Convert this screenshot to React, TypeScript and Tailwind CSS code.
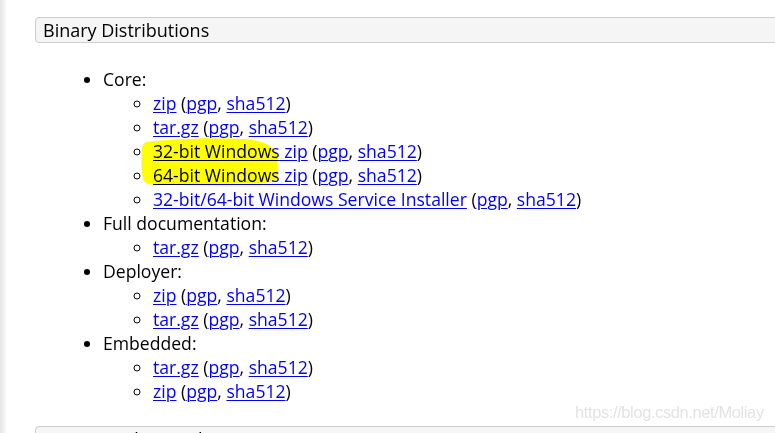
import React from "react";

const A = ({ children }: { children: React.ReactNode }) => (
  <a href="#" className="text-[#0000ee] underline underline-offset-[2px] decoration-[1px]">
    {children}
  </a>
);

const Sub = ({ label }: { label: string }) => (
  <li>
    <A>{label}</A> (<A>pgp</A>, <A>sha512</A>)
  </li>
);

const groups: { title: string; items: string[] }[] = [
  {
    title: "Core:",
    items: [
      "zip",
      "tar.gz",
      "32-bit Windows zip",
      "64-bit Windows zip",
      "32-bit/64-bit Windows Service Installer",
    ],
  },
  { title: "Full documentation:", items: ["tar.gz"] },
  { title: "Deployer:", items: ["zip", "tar.gz"] },
  { title: "Embedded:", items: ["tar.gz", "zip"] },
];

export default function App() {
  return (
    <div
      className="relative w-[775px] h-[433px] overflow-hidden bg-white flex text-black"
      style={{ fontFamily: '"Open Sans", "Noto Sans", sans-serif' }}
    >
      <div className="w-[6px] shrink-0 bg-gradient-to-r from-[#e4e4e4] via-[#eeeeee] to-[#fafafa]" />
      <div className="flex-1 pl-[29px] pt-[17px]">
        <div className="h-[26px] border border-[#cccccc] bg-[#f5f5f5] rounded-[4px] pl-[7px] text-[18px] leading-[24px] mr-[-10px]">
          Binary Distributions
        </div>
        <ul className="list-disc pl-[68px] mt-[24px] text-[17.6px] leading-[24px]">
          {groups.map((g) => (
            <li key={g.title}>
              {g.title}
              <ul className="list-[circle] pl-[50px]">
                {g.items.map((it, i) => (
                  <Sub key={i} label={it} />
                ))}
              </ul>
            </li>
          ))}
        </ul>
        <div className="mt-[23px] h-[26px] border border-[#cccccc] bg-[#f5f5f5] rounded-[4px] pl-[7px] text-[18px] leading-[24px] mr-[-10px]">
          Source Code Distributions
        </div>
      </div>
      <svg
        className="absolute left-0 top-0 mix-blend-multiply pointer-events-none"
        width="775"
        height="433"
        viewBox="0 0 775 433"
      >
        <path
          d="M146 142 C172 139 210 137 245 139 C263 141 274 146 277 155 L278 176 C277 181 271 183 258 183 C232 184 200 184 170 185 C155 186 146 185 143 180 C141 170 141 155 142 147 C143 144 144 143 146 142 Z"
          fill="#ffff00"
        />
      </svg>
      <div
        className="absolute left-[575px] top-[401px] text-[16.5px] leading-[22px] text-[#e3e3e3] tracking-[-0.4px]"
        style={{ fontFamily: '"Liberation Sans", Arial, sans-serif' }}
      >
        https://blog.csdn.net/Moliay
      </div>
    </div>
  );
}
